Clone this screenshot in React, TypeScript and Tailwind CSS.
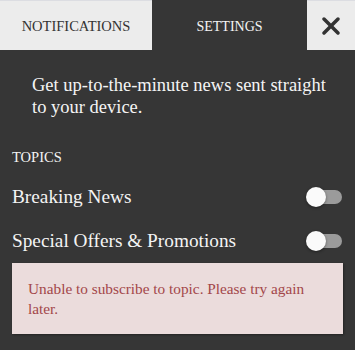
import React from 'react';
import { FaXmark } from 'react-icons/fa6';

const serif = { fontFamily: '"Liberation Serif", Georgia, serif' };

const Toggle: React.FC = () => (
  <div className="relative w-[36px] h-[20px] shrink-0">
    <div className="absolute left-[2px] right-0 top-[3px] h-[14px] rounded-full bg-[#9b9b9b]" />
    <div className="absolute left-0 top-0 w-[20px] h-[20px] rounded-full bg-[#fafafa] shadow-[0_1px_3px_rgba(0,0,0,0.4)]" />
  </div>
);

const topics = ['Breaking News', 'Special Offers & Promotions'];

export default function App() {
  return (
    <div className="w-[355px] min-h-[350px] bg-[#363636] text-[#f4f4f4]" style={serif}>
      {/* Tabs */}
      <div className="flex h-[50px]">
        <button className="w-[152px] bg-[#ececec] border-t border-[#dcdde2] text-[#333] text-[14.5px] flex items-center justify-center pt-[2px]">
          NOTIFICATIONS
        </button>
        <button className="flex-1 bg-[#363636] text-[#f4f4f4] text-[14px] flex items-center justify-center pt-[3px]">
          SETTINGS
        </button>
        <button className="w-[48px] bg-[#ececec] border-t border-[#dcdde2] text-[#333] flex items-center justify-center">
          <FaXmark className="w-[28px] h-[28px]" />
        </button>
      </div>

      {/* Settings */}
      <div className="px-3 pt-[24px] pb-4">
        <p className="pl-5 pr-4 text-[18.5px] leading-[22px]">
          Get up-to-the-minute news sent straight to your device.
        </p>

        <div className="mt-[31px] text-[14.5px] leading-[16px]">TOPICS</div>

        <div className="mt-[10px] pr-[1px]">
          {topics.map((t) => (
            <div key={t} className="flex items-center justify-between h-[44px]">
              <span className="text-[19.3px]">{t}</span>
              <Toggle />
            </div>
          ))}
        </div>

        <div className="bg-[#ebdcdc] text-[#a3474a] text-[15.3px] leading-[20px] pl-4 pr-4 pt-4 pb-[15px] shadow-[1px_1px_2px_rgba(0,0,0,0.35)]">
          Unable to subscribe to topic. Please try again later.
        </div>
      </div>
    </div>
  );
}
